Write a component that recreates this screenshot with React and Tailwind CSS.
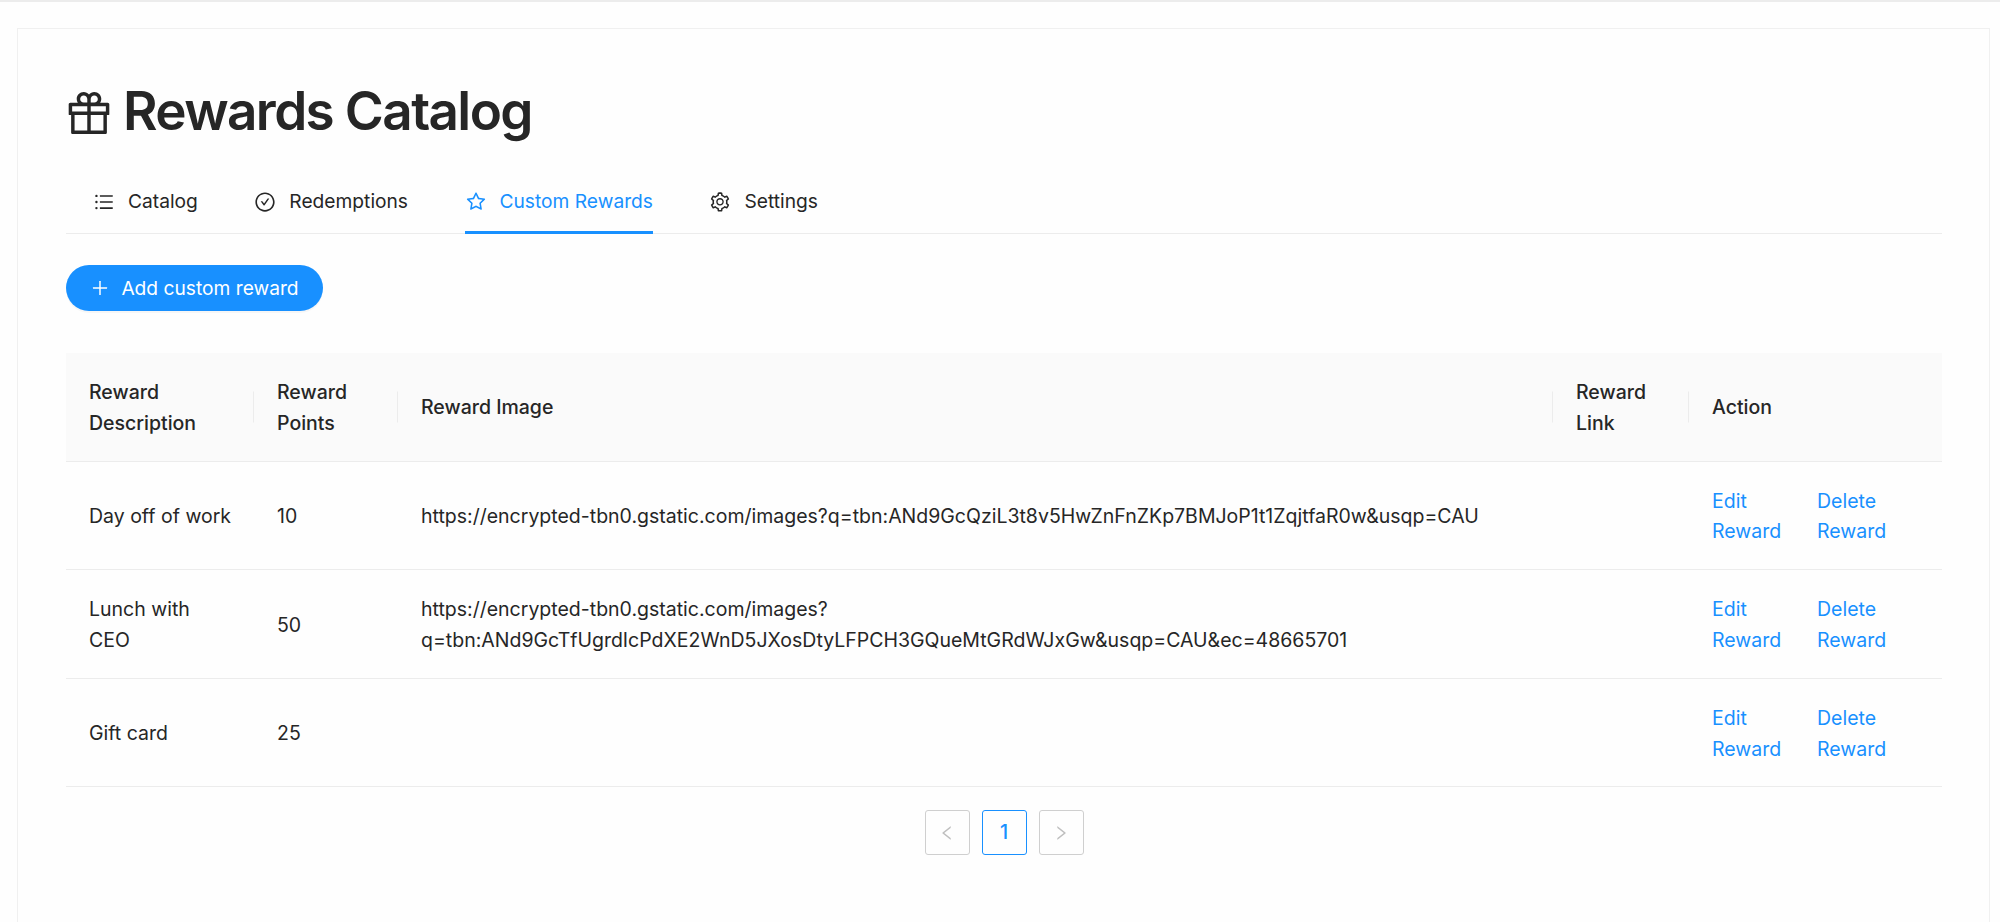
import { AiOutlineGift, AiOutlineUnorderedList, AiOutlineCheckCircle, AiOutlineStar, AiOutlineSetting, AiOutlinePlus, AiOutlineLeft, AiOutlineRight } from 'react-icons/ai';

const tabs = [
  { label: 'Catalog', icon: AiOutlineUnorderedList },
  { label: 'Redemptions', icon: AiOutlineCheckCircle },
  { label: 'Custom Rewards', icon: AiOutlineStar, active: true },
  { label: 'Settings', icon: AiOutlineSetting },
];

const rows = [
  {
    description: 'Day off of work',
    points: 10,
    image: 'https://encrypted-tbn0.gstatic.com/images?q=tbn:ANd9GcQziL3t8v5HwZnFnZKp7BMJoP1t1ZqjtfaR0w&usqp=CAU',
  },
  {
    description: 'Lunch with CEO',
    points: 50,
    image: 'https://encrypted-tbn0.gstatic.com/images?q=tbn:ANd9GcTfUgrdIcPdXE2WnD5JXosDtyLFPCH3GQueMtGRdWJxGw&usqp=CAU&ec=48665701',
  },
  { description: 'Gift card', points: 25, image: '' },
];

const HeadCell = ({ children, divider = true }) => (
  <th className="relative px-[23px] pb-[22px] pt-[24px] text-left font-[450]">
    {children}
    {divider && <span className="absolute right-0 top-1/2 h-[31px] w-px -translate-y-1/2 bg-[#ececec]" />}
  </th>
);

const App = () => {
  return (
    <div className="h-[922px] overflow-hidden bg-[#fefefe] font-['Inter',sans-serif] text-[19.5px] leading-[30.8px] text-[#262626]">
      <div className="h-[2px] bg-[#ececec]" />
      <div className="ml-[17px] mr-[10px] mt-[26px] h-[1000px] border border-[#f0f0f0] pl-[48px] pr-[47px] pt-[51px]">
        <h1 className="flex h-[62px] items-center gap-[8px] text-[53px] font-semibold leading-[62px] tracking-[-1.6px] text-[#262626]">
          <AiOutlineGift size={52} className="-ml-[3px] mt-[4px]" />
          <span>Rewards Catalog</span>
        </h1>

        <nav className="mt-[33px] flex gap-[56.5px] border-b border-[#ececec] pl-[27px] text-[19.2px]">
          {tabs.map(({ label, icon: Icon, active }) => (
            <div
              key={label}
              className={`-mb-px flex h-[59px] items-center gap-[13px] border-b-[3px] pb-[3px] ${active ? 'border-[#1890ff] text-[#1890ff]' : 'border-transparent text-[#262626]'}`}
            >
              <Icon size={22} />
              <span>{label}</span>
            </div>
          ))}
        </nav>

        <button className="mt-[31px] flex h-[46px] w-[257px] items-center justify-center gap-[11px] rounded-full bg-[#1890ff] text-[19.2px] text-white shadow-[0_2px_0_rgba(0,0,0,0.03)]">
          <AiOutlinePlus size={20} />
          <span>Add custom reward</span>
        </button>

        <table className="mt-[42px] w-full table-fixed border-collapse">
          <colgroup>
            <col className="w-[188px]" />
            <col className="w-[144px]" />
            <col />
            <col className="w-[136px]" />
            <col className="w-[253px]" />
          </colgroup>
          <thead>
            <tr className="border-b border-[#ececec] bg-[#fafafa]">
              <HeadCell>Reward Description</HeadCell>
              <HeadCell>Reward Points</HeadCell>
              <HeadCell>Reward Image</HeadCell>
              <HeadCell>Reward Link</HeadCell>
              <HeadCell divider={false}>Action</HeadCell>
            </tr>
          </thead>
          <tbody>
            {rows.map((row) => (
              <tr key={row.description} className="border-b border-[#ececec]">
                <td className="pb-[22px] pl-[23px] pr-[20px] pt-[24px]">{row.description}</td>
                <td className="px-[23px] pb-[22px] pt-[24px]">{row.points}</td>
                <td className="break-words px-[23px] pb-[22px] pt-[24px]">{row.image}</td>
                <td className="px-[23px] pb-[22px] pt-[24px]" />
                <td className="px-[23px] pb-[22px] pt-[24px]">
                  <div className="flex text-[#1890ff]">
                    <a className="w-[105px] shrink-0">Edit<br />Reward</a>
                    <a>Delete<br />Reward</a>
                  </div>
                </td>
              </tr>
            ))}
          </tbody>
        </table>

        <div className="mt-[23px] flex justify-center gap-[12px]">
          <button className="flex h-[45px] w-[45px] items-center justify-center rounded-[3px] border border-[#cfcfcf] text-[#bfbfbf]">
            <AiOutlineLeft size={18} />
          </button>
          <button className="flex h-[45px] w-[45px] items-center justify-center rounded-[3px] border border-[#1890ff] font-medium text-[#1890ff]">
            1
          </button>
          <button className="flex h-[45px] w-[45px] items-center justify-center rounded-[3px] border border-[#cfcfcf] text-[#bfbfbf]">
            <AiOutlineRight size={18} />
          </button>
        </div>
      </div>
    </div>
  );
};

export default App;
